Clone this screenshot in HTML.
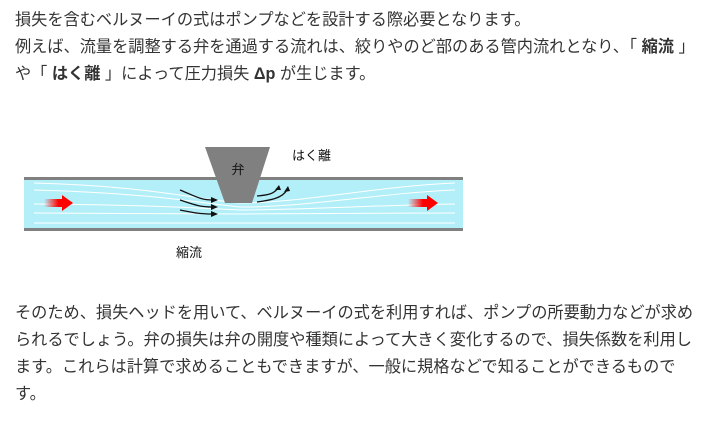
<!DOCTYPE html>
<html><head><meta charset="utf-8"><style>
body{margin:0;width:714px;height:433px;background:#fff;overflow:hidden;font-family:"Liberation Sans","Noto Sans CJK JP",sans-serif;color:#333;font-size:16.2px;}
.p{position:absolute;left:15px;line-height:27px;white-space:nowrap}
b{font-weight:bold}
</style></head><body>
<div class="p" style="top:7px">損失を含むベルヌーイの式はポンプなどを設計する際必要となります。<br>例えば、流量を調整する弁を通過する流れは、絞りやのど部のある管内流れとなり、「 <b>縮流</b> 」<br>や「 <b>はく離</b> 」によって圧力損失 <b>Δp</b> が生じます。</div>
<svg style="position:absolute;left:0;top:0" width="714" height="433">
<defs>
<linearGradient id="r" x1="0" x2="1"><stop offset="0" stop-color="#f00" stop-opacity="0"/><stop offset="0.5" stop-color="#f00"/></linearGradient>
</defs>
<rect x="24" y="179" width="439" height="50" fill="#b3eff8"/>
<rect x="24" y="177" width="439" height="3" fill="#808080"/>
<rect x="24" y="228" width="439" height="3" fill="#808080"/>
<g stroke="#fff" stroke-width="1" fill="none">
<path d="M34 183 C150 186 200 200 240 203 C300 203 380 186 455 183"/>
<path d="M34 190 C150 193 200 203 240 207 C300 208 380 193 455 190"/>
<path d="M34 204 C150 205 200 208 240 210 C300 210 380 205 455 204"/>
<path d="M34 213 C150 214 200 214 240 214 C300 214 380 213 455 213"/>
<path d="M34 223 C150 223 300 223 455 223"/>
</g>
<polygon points="205,147 270,147 252,203 225,203" fill="#808080"/>
<text x="238" y="174" font-size="13" fill="#111" text-anchor="middle">弁</text>
<text x="292" y="160" font-size="13" fill="#111">はく離</text>
<text x="176" y="257" font-size="13" fill="#111">縮流</text>
<g stroke="#111" stroke-width="1.3" fill="none">
<path d="M180 190 C195 196 200 200 213 200"/>
<path d="M180 200 C195 205 200 207 213 207"/>
<path d="M180 210 C195 213 200 214 213 214"/>
<path d="M257 196 C268 195 274 194 278 188"/>
<path d="M257 202 C272 200 282 198 287 190"/>
</g>
<g fill="#111">
<polygon points="218,200 211,197 211,203"/>
<polygon points="218,207 211,204 211,210"/>
<polygon points="218,214 211,211 211,217"/>
<polygon points="279,185 275,190 281,190"/>
<polygon points="288,186 284,192 290,191"/>
</g>
<polygon points="44,199 62,199 62,195 73,203 62,211 62,207 44,207" fill="url(#r)"/>
<polygon points="408,199 427,199 427,195 438,203 427,211 427,207 408,207" fill="url(#r)"/>
</svg>
<div class="p" style="top:300px;line-height:27px">そのため、損失ヘッドを用いて、ベルヌーイの式を利用すれば、ポンプの所要動力などが求め<br>られるでしょう。弁の損失は弁の開度や種類によって大きく変化するので、損失係数を利用し<br>ます。これらは計算で求めることもできますが、一般に規格などで知ることができるもので<br>す。</div>
</body></html>
